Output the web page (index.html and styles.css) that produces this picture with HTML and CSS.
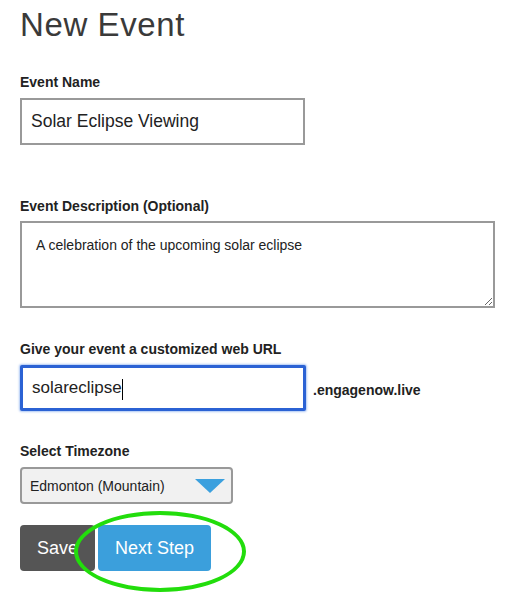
FILE: index.html
```html
<!DOCTYPE html>
<html lang="en">
<head>
    <meta charset="UTF-8">
    <meta name="viewport" content="width=device-width, initial-scale=1.0">
    <title>New Event</title>
    <link rel="stylesheet" href="styles.css">
</head>
<body>
    <div class="page">
        <h1>New Event</h1>
        <form id="eventForm" action="#" method="post">
            <label class="field-label field-name" for="eventName">Event Name</label>
            <input class="text-input name-input" type="text" id="eventName" name="name" value="Solar Eclipse Viewing">

            <label class="field-label field-desc" for="eventDesc">Event Description (Optional)</label>
            <textarea class="desc-input" id="eventDesc" name="description">A celebration of the upcoming solar eclipse</textarea>

            <label class="field-label field-url">Give your event a customized web URL</label>
            <div class="url-row">
                <div class="text-input url-input">solareclipse<span class="caret"></span></div>
                <span class="url-suffix">.engagenow.live</span>
            </div>

            <label class="field-label field-tz">Select Timezone</label>
            <div class="select-box">
                <span>Edmonton (Mountain)</span>
                <span class="select-arrow"></span>
            </div>

            <div class="button-row">
                <button type="button" class="btn btn-save">Save</button>
                <button type="submit" class="btn btn-next">Next Step</button>
                <div class="highlight"></div>
            </div>
        </form>
    </div>
</body>
</html>
```

FILE: styles.css
```css
body {
    font-family: "Liberation Sans", Arial, sans-serif;
    margin: 0;
    padding: 0;
    background-color: #fff;
    color: #222;
}

.page {
    padding: 6px 20px 40px 20px;
}

h1 {
    margin: 0;
    font-size: 33px;
    font-weight: normal;
    letter-spacing: 0.6px;
    line-height: 38px;
    color: #3a3a3a;
}

form {
    display: flex;
    flex-direction: column;
    align-items: flex-start;
}

.field-label {
    font-size: 14px;
    font-weight: bold;
    line-height: 16px;
    color: #222;
    margin-bottom: 8px;
}

.field-name {
    margin-top: 30px;
}

.field-desc {
    margin-top: 53px;
    margin-bottom: 7px;
}

.field-url {
    margin-top: 33px;
}

.field-tz {
    margin-top: 32px;
}

.text-input {
    box-sizing: border-box;
    font-family: inherit;
    font-size: 17.5px;
    color: #222;
    border: 2px solid #999;
    border-radius: 0;
    padding: 0 9px;
    outline: none;
    background: #fff;
}

.name-input {
    width: 285px;
    height: 47px;
}

.desc-input {
    box-sizing: border-box;
    width: 475px;
    height: 87px;
    border: 2px solid #999;
    padding: 14px 14px;
    font-family: inherit;
    font-size: 14px;
    color: #222;
    resize: both;
    outline: none;
}

.url-row {
    display: flex;
    align-items: center;
    gap: 7px;
}

.url-input {
    width: 286px;
    height: 46px;
    display: flex;
    align-items: center;
    border: 3px solid #2b62d4;
    border-radius: 2px;
    box-shadow: 0 0 2px 1px rgba(70, 130, 230, 0.45);
    padding: 0 9px;
    font-size: 17px;
}

.caret {
    display: inline-block;
    width: 1px;
    height: 21px;
    background: #000;
    margin-top: 2px;
}

.url-suffix {
    font-size: 14px;
    font-weight: bold;
    color: #222;
    padding-top: 4px;
}

.select-box {
    box-sizing: border-box;
    width: 213px;
    height: 37px;
    display: flex;
    align-items: center;
    justify-content: space-between;
    padding: 0 6px 0 8px;
    background: #f1f1f1;
    border: 2px solid #999;
    border-radius: 4px;
    font-size: 14px;
    color: #222;
}

.select-arrow {
    width: 0;
    height: 0;
    border-left: 15px solid transparent;
    border-right: 15px solid transparent;
    border-top: 14px solid #3ba0de;
    margin-top: 1px;
}

.button-row {
    position: relative;
    display: flex;
    gap: 3px;
    margin-top: 21px;
}

.btn {
    height: 46px;
    border: none;
    border-radius: 4px;
    color: #fff;
    font-family: inherit;
    font-size: 18px;
    cursor: pointer;
}

.btn-save {
    width: 75px;
    background-color: #555;
}

.btn-next {
    width: 113px;
    background-color: #3b9fdc;
}

.btn-next:hover {
    background-color: #2d8bc6;
}

.highlight {
    position: absolute;
    left: 54px;
    top: -14px;
    width: 172px;
    height: 81px;
    box-sizing: border-box;
    border: 4px solid #22dd0c;
    border-radius: 50%;
    pointer-events: none;
}
```
